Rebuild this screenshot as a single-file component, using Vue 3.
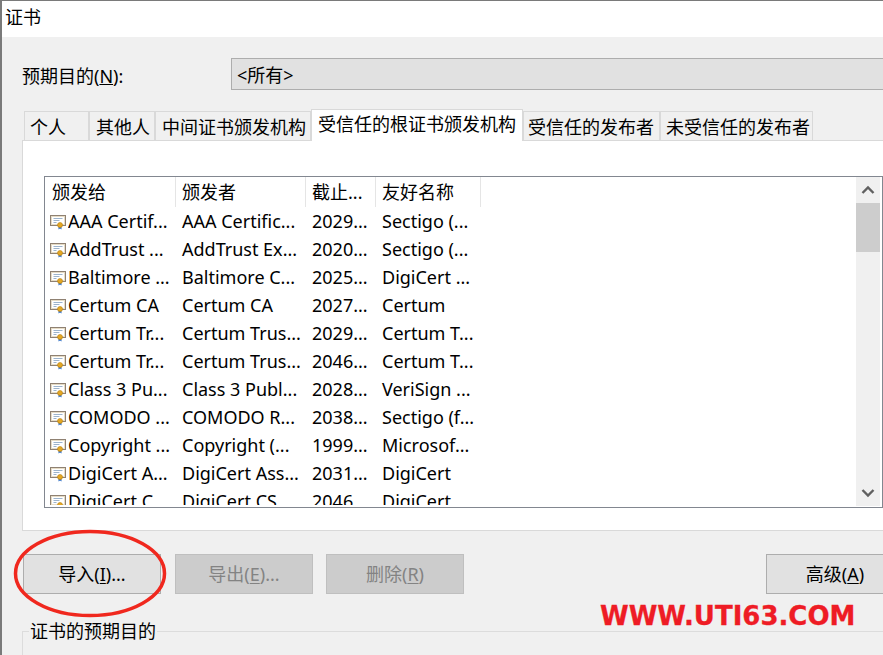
<script setup>
const tabs = [
  { label: '个人', w: 65, pad: 5 },
  { label: '其他人', w: 66, pad: 6 },
  { label: '中间证书颁发机构', w: 156, pad: 6 },
  { label: '受信任的根证书颁发机构', w: 212, pad: 6, active: true },
  { label: '受信任的发布者', w: 137, pad: 4 },
  { label: '未受信任的发布者', w: 153, pad: 5 }
]
const cols = [
  { label: '颁发给', w: 131 },
  { label: '颁发者', w: 130 },
  { label: '截止...', w: 70 },
  { label: '友好名称', w: 105 }
]
const rows = [
  ['AAA Certif...', 'AAA Certific...', '2029...', 'Sectigo (...'],
  ['AddTrust ...', 'AddTrust Ex...', '2020...', 'Sectigo (...'],
  ['Baltimore ...', 'Baltimore C...', '2025...', 'DigiCert ...'],
  ['Certum CA', 'Certum CA', '2027...', 'Certum'],
  ['Certum Tr...', 'Certum Trus...', '2029...', 'Certum T...'],
  ['Certum Tr...', 'Certum Trus...', '2046...', 'Certum T...'],
  ['Class 3 Pu...', 'Class 3 Publ...', '2028...', 'VeriSign ...'],
  ['COMODO ...', 'COMODO R...', '2038...', 'Sectigo (f...'],
  ['Copyright ...', 'Copyright (...', '1999...', 'Microsof...'],
  ['DigiCert A...', 'DigiCert Ass...', '2031...', 'DigiCert'],
  ['DigiCert C...', 'DigiCert CS...', '2046...', 'DigiCert']
]
</script>

<template>
  <div class="window">
    <div class="titlebar">证书</div>
    <div class="body">
      <div class="purpose">
        <span class="purpose-label">预期目的(<u>N</u>):</span>
        <div class="combo">&lt;所有&gt;</div>
      </div>

      <div class="tabs">
        <div
          v-for="t in tabs"
          :key="t.label"
          class="tab"
          :class="{ active: t.active }"
          :style="{ width: t.w + 'px', paddingLeft: t.pad + 'px' }"
        >{{ t.label }}</div>
      </div>

      <div class="panel">
        <div class="list">
          <div class="list-main">
            <div class="head">
              <div
                v-for="c in cols"
                :key="c.label"
                class="head-cell"
                :style="{ width: c.w + 'px' }"
              >{{ c.label }}</div>
            </div>
            <div v-for="(r, i) in rows" :key="i" class="row">
              <svg class="cert" width="18" height="18" viewBox="0 0 18 18">
                <rect x="0.500" y="3.500" width="15" height="10" fill="#e6dcc6" stroke="#8f8172" />
                <rect x="2" y="5" width="12" height="7" fill="#fff" />
                <path d="M3.500 6.500h9M3.500 8.500h6M3.500 10.500h3" stroke="#9db4cc" stroke-width="1" />
                <path d="M8.500 14v3.500l1.500-1 1.500 1V14z" fill="#2f6fc4" />
                <circle cx="10" cy="13" r="2.500" fill="#e5a823" stroke="#b57e12" stroke-width="0.600" />
              </svg>
              <span class="cell first">{{ r[0] }}</span>
              <span class="cell second">{{ r[1] }}</span>
              <span class="cell third">{{ r[2] }}</span>
              <span class="cell fourth">{{ r[3] }}</span>
            </div>
          </div>
          <div class="scrollbar">
            <div class="arrow">
              <svg width="14" height="10" viewBox="0 0 14 10"><path d="M1.500 8L7 2.500 12.500 8" fill="none" stroke="#606060" stroke-width="2.400" /></svg>
            </div>
            <div class="thumb"></div>
            <div class="track"></div>
            <div class="arrow">
              <svg width="14" height="10" viewBox="0 0 14 10"><path d="M1.500 2L7 7.500 12.500 2" fill="none" stroke="#606060" stroke-width="2.400" /></svg>
            </div>
          </div>
        </div>
      </div>

      <div class="actions">
        <div class="btn import">导入(<u>I</u>)...</div>
        <div class="btn off export">导出(<u>E</u>)...</div>
        <div class="btn off remove">删除(<u>R</u>)</div>
        <div class="btn advanced">高级(<u>A</u>)</div>
      </div>

      <div class="group">
        <span class="group-title">证书的预期目的</span>
      </div>
    </div>

    <svg class="ring" width="160" height="95" viewBox="0 0 160 95">
      <ellipse cx="78" cy="46.500" rx="74.500" ry="42" fill="none" stroke="#f0281e" stroke-width="3.500" />
    </svg>
    <div class="mark">WWW.UTI63.COM</div>
  </div>
</template>

<style>
html, body { margin: 0; padding: 0; background: #f0f0f0; }
</style>

<style scoped>
.window {
  position: relative;
  width: 883px;
  height: 655px;
  overflow: hidden;
  box-sizing: border-box;
  border-left: 2px solid #7a7a7a;
  border-top: 1px solid #7a7a7a;
  background: #f0f0f0;
  color: #000;
  font-family: "Noto Sans", "Noto Sans CJK SC", sans-serif;
  font-size: 18px;
  line-height: 24px;
}
.titlebar {
  height: 36px;
  padding: 4px 0 0 3px;
  box-sizing: border-box;
  background: #fff;
}
.body {
  padding: 0 0 0 20px;
}
.purpose {
  display: flex;
  align-items: center;
  height: 32px;
  margin-top: 21px;
}
.purpose-label { width: 209px; padding-top: 4px; flex: none; }
.combo {
  flex: 1;
  height: 32px;
  box-sizing: border-box;
  border: 1px solid #adadad;
  border-right: none;
  background: #e1e1e1;
  padding: 4px 0 0 5px;
}
.tabs {
  display: flex;
  align-items: flex-end;
  height: 31px;
  margin-top: 19px;
  padding-left: 2px;
  position: relative;
  z-index: 1;
}
.tab {
  height: 29px;
  box-sizing: border-box;
  border: 1px solid #d9d9d9;
  border-bottom: none;
  padding-top: 3px;
  background: #f0f0f0;
  white-space: nowrap;
  flex: none;
}
.tab.active {
  height: 32px;
  margin-bottom: -1px;
  background: #fff;
  padding-top: 2px;
}
.panel {
  height: 391px;
  box-sizing: border-box;
  border: 1px solid #d9d9d9;
  border-right: none;
  background: #fff;
  padding: 35px 0 0 21px;
}
.list {
  display: flex;
  width: 839px;
  height: 332px;
  box-sizing: border-box;
  border: 1px solid #828790;
  overflow: hidden;
}
.list-main { flex: 1; min-width: 0; height: 328px; overflow: hidden; }
.head { display: flex; height: 30px; }
.head-cell {
  height: 30px;
  box-sizing: border-box;
  border-right: 1px solid #e5e5e5;
  padding: 3px 0 0 6px;
  white-space: nowrap;
}
.head-cell:first-child { padding-left: 7px; }
.row {
  display: flex;
  align-items: center;
  height: 28px;
}
.cert { flex: none; margin: 0 0 0 5px; }
.cell { white-space: nowrap; overflow: hidden; box-sizing: border-box; flex: none; }
.first { width: 107px; }
.second { width: 130px; padding-left: 7px; }
.third { width: 70px; padding-left: 7px; }
.fourth { width: 105px; padding-left: 7px; }
.scrollbar {
  flex: none;
  width: 24px;
  margin: 0 2px 1px 0;
  display: flex;
  flex-direction: column;
  background: #f0f0f0;
}
.arrow {
  height: 26px;
  flex: none;
  display: flex;
  align-items: center;
  justify-content: center;
}
.thumb { height: 49px; flex: none; background: #cdcdcd; }
.track { flex: 1; }
.actions {
  display: flex;
  height: 40px;
  margin-top: 23px;
}
.btn {
  width: 138px;
  height: 40px;
  flex: none;
  box-sizing: border-box;
  border: 1px solid #adadad;
  background: #e1e1e1;
  display: flex;
  justify-content: center;
  align-items: center;
  white-space: nowrap;
}
.btn u { text-underline-offset: 2px; }
.off {
  background: #cccccc;
  border-color: #bfbfbf;
  color: #838383;
}
.import { margin-left: 1px; }
.export { margin-left: 14px; }
.remove { margin-left: 13px; }
.advanced { margin-left: 302px; }
.group {
  height: 40px;
  margin-top: 37px;
  border: 1px solid #dcdcdc;
  border-right: none;
  border-bottom: none;
  padding-left: 6px;
}
.group-title {
  display: inline-block;
  background: #f0f0f0;
  position: relative;
  top: -13px;
  padding: 0 1px;
}
.ring {
  position: absolute;
  left: 10px;
  top: 526px;
}
.mark {
  position: absolute;
  left: 598px;
  top: 600px;
  color: #ee1c25;
  font-family: "DejaVu Sans", sans-serif;
  font-weight: 700;
  font-size: 26px;
  line-height: 30px;
  white-space: nowrap;
  -webkit-text-stroke: 0.3px #ee1c25;
}
</style>
